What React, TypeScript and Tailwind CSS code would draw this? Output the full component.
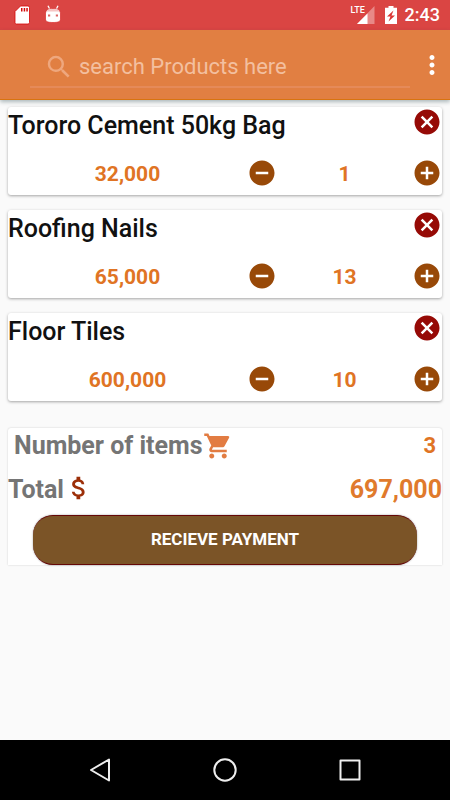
import { useState } from "react";
import {
  MdAddCircle,
  MdAttachMoney,
  MdCancel,
  MdMoreVert,
  MdRemoveCircle,
  MdSearch,
  MdShoppingCart,
} from "react-icons/md";

type Product = { name: string; price: string; quantity: number };

const products: Product[] = [
  { name: "Tororo Cement 50kg Bag", price: "32,000", quantity: 1 },
  { name: "Roofing Nails", price: "65,000", quantity: 13 },
  { name: "Floor Tiles", price: "600,000", quantity: 10 },
];

function StatusBar() {
  return (
    <div className="flex h-[30px] items-center bg-[#da4543] pr-[10px] pl-[14px] text-white">
      <svg className="h-5 w-4" viewBox="0 0 16 20" fill="none" aria-hidden="true">
        <path
          d="M6.5 1H14a1.5 1.5 0 0 1 1.500 1.500V17.500a1.500 1.500 0 0 1-1.500 1.500H2.500A1.500 1.500 0 0 1 1 17.500V6.500Z"
          fill="#fff"
          stroke="#d50808"
          strokeWidth=".8"
        />
        <path d="M7 3h1.500v3.500H7zM9.700 3h1.500v3.500H9.700zM12.300 3h1.500v3.500h-1.500z" fill="#d50808" />
      </svg>
      <svg className="ml-[14px] h-5 w-[18px]" viewBox="0 0 18 20" fill="none" aria-hidden="true">
        <path d="m4 .8 2 4M14 .8l-2 4" stroke="#fff" strokeWidth="1.300" />
        <path
          d="M1.500 8C2 4.800 4.500 3.500 9 3.500S16 4.800 16.500 8v6c0 2.500-2 3.500-7.500 3.500S1.500 16.500 1.500 14Z"
          fill="#fff"
          stroke="#d92b2b"
          strokeWidth=".7"
        />
        <path d="M3 5.500C4.500 4 6.500 4 9 4s4.500 0 6 1.500v1H3z" fill="#f6c5c4" />
        <path d="M4 9.500h2.200v2H4zM11.800 9.500H14v2h-2.200z" fill="#dc6664" />
      </svg>
      <div className="ml-auto flex items-center">
        <div className="relative h-5 w-6">
          <svg className="h-5 w-6" viewBox="0 0 24 20" aria-hidden="true">
            <path d="M23.500 1v18H6Z" fill="#e88887" />
            <path d="M16.500 8.500V19H6Z" fill="#fff" />
          </svg>
          <span className="absolute top-0 left-0 text-[9px] leading-[10px] font-medium">LTE</span>
        </div>
        <svg className="ml-[9px] h-5 w-[14px]" viewBox="0 0 14 20" aria-hidden="true">
          <path d="M4.500 1h5v1.800H13V19H1V2.800h3.500Z" fill="#fff" />
          <path d="m9.500 5.500-6.500 6h3.500L4.500 16.500 11 10.500H7.500Z" fill="#da3432" />
        </svg>
        <span className="ml-[7px] text-lg leading-[30px] font-medium">2:43</span>
      </div>
    </div>
  );
}

function SearchBar() {
  return (
    <header className="relative flex h-[70px] items-start border-b border-[#d8730f] bg-[#e17f42] pl-[30px] shadow-[0_2px_4px_rgba(30,60,70,0.35)]">
      <label className="mt-[17px] flex h-[41px] flex-1 items-center border-b-2 border-[#e58a59] pl-[14px]">
        <MdSearch className="size-[30px] shrink-0 text-[#eea77e]" aria-hidden="true" />
        <input
          type="search"
          aria-label="Search products"
          placeholder="search Products here"
          className="ml-[5px] w-full min-w-0 bg-transparent text-[22px] text-white outline-none placeholder:text-[#f3bf9f]"
        />
      </label>
      <button type="button" aria-label="More options" className="mt-5 ml-[7px] w-[33px] text-white">
        <MdMoreVert className="size-[30px]" />
      </button>
    </header>
  );
}

function ProductCard({ product }: { product: Product }) {
  const [quantity, setQuantity] = useState(product.quantity);

  return (
    <li className="h-[88px] rounded-[3px] bg-white shadow-[0_1px_3px_rgba(0,0,0,0.35)]">
      <div className="flex h-9 justify-between">
        <h2 className="text-[25px] leading-[38px] font-medium text-[#111]">{product.name}</h2>
        <button type="button" aria-label={`Remove ${product.name}`} className="size-[30px] text-[#960a06]">
          <MdCancel className="size-[30px]" />
        </button>
      </div>
      <div className="flex h-[60px] items-center text-[21px] font-bold text-[#e07424]">
        <span className="flex-1 pt-[3px] text-center">{product.price}</span>
        <div className="flex w-[195px] items-center justify-between">
          <button
            type="button"
            aria-label={`Decrease ${product.name}`}
            className="size-[30px] text-[#984908]"
            onClick={() => setQuantity(Math.max(0, quantity - 1))}
          >
            <MdRemoveCircle className="size-[30px]" />
          </button>
          <span className="pt-[3px]">{quantity}</span>
          <button
            type="button"
            aria-label={`Increase ${product.name}`}
            className="size-[30px] text-[#984908]"
            onClick={() => setQuantity(quantity + 1)}
          >
            <MdAddCircle className="size-[30px]" />
          </button>
        </div>
      </div>
    </li>
  );
}

function Summary() {
  return (
    <section className="mt-[27px] rounded-t-[3px] bg-white text-[25px] font-bold text-[#757575] shadow-[0_0_2px_rgba(0,0,0,0.2)]">
      <div className="flex h-9 items-center px-[6px]">
        <span>Number of items</span>
        <MdShoppingCart className="size-[30px] text-[#e27c42]" aria-hidden="true" />
        <span className="ml-auto text-[22px] leading-8 text-[#e07424]">3</span>
      </div>
      <div className="flex h-[51px] items-start pt-[9px] leading-[34px]">
        <span>Total</span>
        <MdAttachMoney className="size-[30px] text-[#9c2f08]" aria-hidden="true" />
        <span className="ml-auto text-[#e07a2c]">697,000</span>
      </div>
      <div className="px-[25px]">
        <button
          type="button"
          className="h-[50px] w-full rounded-[20px] border-y border-[#650707] bg-[#7b5427] text-[17px] font-bold text-white shadow-[0_0_2px_rgba(0,0,0,0.4)]"
        >
          RECIEVE PAYMENT
        </button>
      </div>
    </section>
  );
}

function NavigationBar() {
  return (
    <nav
      aria-label="System"
      className="mt-auto flex h-[60px] items-center justify-center gap-[95px] bg-black text-[#eee]"
    >
      <button type="button" aria-label="Back">
        <svg className="size-[30px]" viewBox="0 0 30 30" fill="none" stroke="currentColor" strokeWidth="2" strokeLinejoin="round">
          <path d="M24 4.500v21L6 15Z" />
        </svg>
      </button>
      <button type="button" aria-label="Home">
        <svg className="size-[30px]" viewBox="0 0 30 30" fill="none" stroke="currentColor" strokeWidth="2">
          <circle cx="15" cy="15" r="10.700" />
        </svg>
      </button>
      <button type="button" aria-label="Recent apps">
        <svg className="size-[30px]" viewBox="0 0 30 30" fill="none" stroke="currentColor" strokeWidth="2" strokeLinejoin="round">
          <path d="M5.500 5.500h19v19h-19z" />
        </svg>
      </button>
    </nav>
  );
}

export default function App() {
  return (
    <div className="flex min-h-screen flex-col bg-[#fafafa] font-[Roboto,sans-serif]">
      <StatusBar />
      <SearchBar />
      <main className="px-2 pt-[7px] pb-6">
        <ul className="flex flex-col gap-[15px]">
          {products.map((product) => (
            <ProductCard key={product.name} product={product} />
          ))}
        </ul>
        <Summary />
      </main>
      <NavigationBar />
    </div>
  );
}
